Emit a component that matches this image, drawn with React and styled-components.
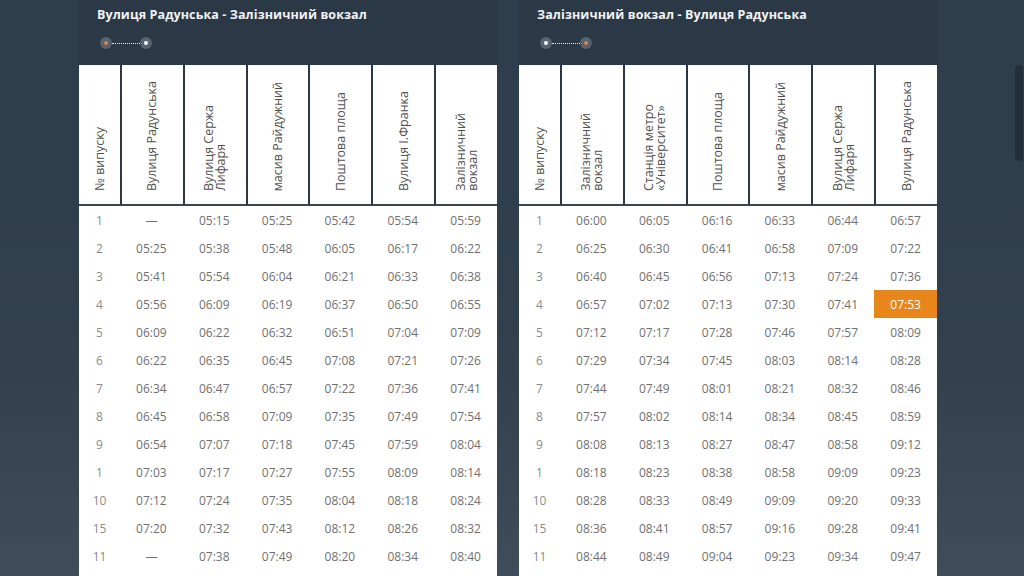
import styled, { createGlobalStyle } from "styled-components";

const GlobalStyle = createGlobalStyle`
  html, body {
    margin: 0;
    height: 100%;
    overflow: hidden;
  }
  body {
    background: linear-gradient(to top, #3f4c59 0%, #33414f 35%, #2f3e4c 70%, #2f3e4c 100%);
    font-family: "Open Sans", "Liberation Sans", sans-serif;
  }
`;

const Page = styled.div`
  height: 576px;
  display: flex;
  gap: 22px;
  padding-left: 79px;
  overflow: hidden;
`;

const Card = styled.section`
  width: 418px;
  display: flex;
  flex-direction: column;
  background: #2b3845;
`;

const CardHead = styled.div`
  flex-shrink: 0;
  height: 65px;
  padding: 7px 0 0 18px;
  box-sizing: border-box;
`;

const Title = styled.h2`
  margin: 0;
  font-size: 12.5px;
  font-weight: 700;
  line-height: 16px;
  color: #f2f4f6;
  letter-spacing: 0.1px;
`;

const Route = styled.div`
  display: flex;
  align-items: center;
  margin-top: 14px;
  padding-left: 3px;
`;

const Stop = styled.span`
  width: 12px;
  height: 12px;
  border-radius: 50%;
  background: #566270;
  display: flex;
  align-items: center;
  justify-content: center;

  &::after {
    content: "";
    width: 4px;
    height: 4px;
    border-radius: 50%;
    background: ${(p) => (p.$start ? "#dd8445" : "#ffffff")};
  }
`;

const Dots = styled.span`
  width: 28px;
  height: 0;
  border-top: 1px dotted #e6e9ec;
`;

const TableWrap = styled.div`
  flex: 1 0 auto;
  background: #ffffff;
`;

const Table = styled.table`
  width: 100%;
  border-collapse: separate;
  border-spacing: 0;
  table-layout: fixed;
`;

const Th = styled.th`
  height: 131px;
  padding: 0 0 8px;
  vertical-align: bottom;
  text-align: center;
  background: #ffffff;
  border-bottom: 2px solid #3a4755;
  font-weight: 400;
  & + & {
    border-left: 2px solid #2b3845;
  }
`;

const Label = styled.div`
  display: inline-block;
  writing-mode: vertical-rl;
  text-orientation: sideways;
  transform: rotate(180deg);
  font-size: 12.5px;
  line-height: 12px;
  color: #505050;
  text-align: start;
  white-space: nowrap;
`;

const Td = styled.td`
  height: 28px;
  padding: 0;
  text-align: center;
  font-size: 12px;
  color: ${(p) => (p.$num ? "#8a8a8a" : "#707070")};
  background: ${(p) => (p.$now ? "#e8861b" : "transparent")};
  ${(p) => p.$now && "color: #ffffff;"}
`;

const ScrollThumb = styled.div`
  position: fixed;
  right: 1px;
  top: 65px;
  width: 8px;
  height: 96px;
  border-radius: 4px;
  background: #222e38;
`;

const forward = {
  title: "Вулиця Радунська - Залізничний вокзал",
  stops: [
    ["Вулиця Радунська"],
    ["Вулиця Сержа", "Лифаря"],
    ["масив Райдужний"],
    ["Поштова площа"],
    ["Вулиця І.Франка"],
    ["Залізничний", "вокзал"],
  ],
  rows: [
    ["1", "—", "05:15", "05:25", "05:42", "05:54", "05:59"],
    ["2", "05:25", "05:38", "05:48", "06:05", "06:17", "06:22"],
    ["3", "05:41", "05:54", "06:04", "06:21", "06:33", "06:38"],
    ["4", "05:56", "06:09", "06:19", "06:37", "06:50", "06:55"],
    ["5", "06:09", "06:22", "06:32", "06:51", "07:04", "07:09"],
    ["6", "06:22", "06:35", "06:45", "07:08", "07:21", "07:26"],
    ["7", "06:34", "06:47", "06:57", "07:22", "07:36", "07:41"],
    ["8", "06:45", "06:58", "07:09", "07:35", "07:49", "07:54"],
    ["9", "06:54", "07:07", "07:18", "07:45", "07:59", "08:04"],
    ["1", "07:03", "07:17", "07:27", "07:55", "08:09", "08:14"],
    ["10", "07:12", "07:24", "07:35", "08:04", "08:18", "08:24"],
    ["15", "07:20", "07:32", "07:43", "08:12", "08:26", "08:32"],
    ["11", "—", "07:38", "07:49", "08:20", "08:34", "08:40"],
  ],
};

const backward = {
  title: "Залізничний вокзал - Вулиця Радунська",
  reverse: true,
  now: [3, 6],
  stops: [
    ["Залізничний", "вокзал"],
    ["Станція метро", "«Університет»"],
    ["Поштова площа"],
    ["масив Райдужний"],
    ["Вулиця Сержа", "Лифаря"],
    ["Вулиця Радунська"],
  ],
  rows: [
    ["1", "06:00", "06:05", "06:16", "06:33", "06:44", "06:57"],
    ["2", "06:25", "06:30", "06:41", "06:58", "07:09", "07:22"],
    ["3", "06:40", "06:45", "06:56", "07:13", "07:24", "07:36"],
    ["4", "06:57", "07:02", "07:13", "07:30", "07:41", "07:53"],
    ["5", "07:12", "07:17", "07:28", "07:46", "07:57", "08:09"],
    ["6", "07:29", "07:34", "07:45", "08:03", "08:14", "08:28"],
    ["7", "07:44", "07:49", "08:01", "08:21", "08:32", "08:46"],
    ["8", "07:57", "08:02", "08:14", "08:34", "08:45", "08:59"],
    ["9", "08:08", "08:13", "08:27", "08:47", "08:58", "09:12"],
    ["1", "08:18", "08:23", "08:38", "08:58", "09:09", "09:23"],
    ["10", "08:28", "08:33", "08:49", "09:09", "09:20", "09:33"],
    ["15", "08:36", "08:41", "08:57", "09:16", "09:28", "09:41"],
    ["11", "08:44", "08:49", "09:04", "09:23", "09:34", "09:47"],
  ],
};

const Schedule = ({ data }) => (
  <Card>
    <CardHead>
      <Title>{data.title}</Title>
      <Route>
        <Stop $start={!data.reverse} />
        <Dots />
        <Stop $start={data.reverse} />
      </Route>
    </CardHead>
    <TableWrap>
      <Table>
        <colgroup>
          <col style={{ width: 41 }} />
          {data.stops.map((_, i) => (
            <col key={i} />
          ))}
        </colgroup>
        <thead>
          <tr>
            <Th>
              <Label>№ випуску</Label>
            </Th>
            {data.stops.map((lines, i) => (
              <Th key={i}>
                <Label>
                  {lines.map((l, j) => (
                    <span key={j}>
                      {j > 0 && <br />}
                      {l}
                    </span>
                  ))}
                </Label>
              </Th>
            ))}
          </tr>
        </thead>
        <tbody>
          {data.rows.map((row, r) => (
            <tr key={r}>
              {row.map((v, c) => (
                <Td
                  key={c}
                  $num={c === 0}
                  $now={data.now && data.now[0] === r && data.now[1] === c}
                >
                  {v}
                </Td>
              ))}
            </tr>
          ))}
        </tbody>
      </Table>
    </TableWrap>
  </Card>
);

export default function App() {
  return (
    <>
      <GlobalStyle />
      <Page>
        <Schedule data={forward} />
        <Schedule data={backward} />
      </Page>
      <ScrollThumb />
    </>
  );
}
